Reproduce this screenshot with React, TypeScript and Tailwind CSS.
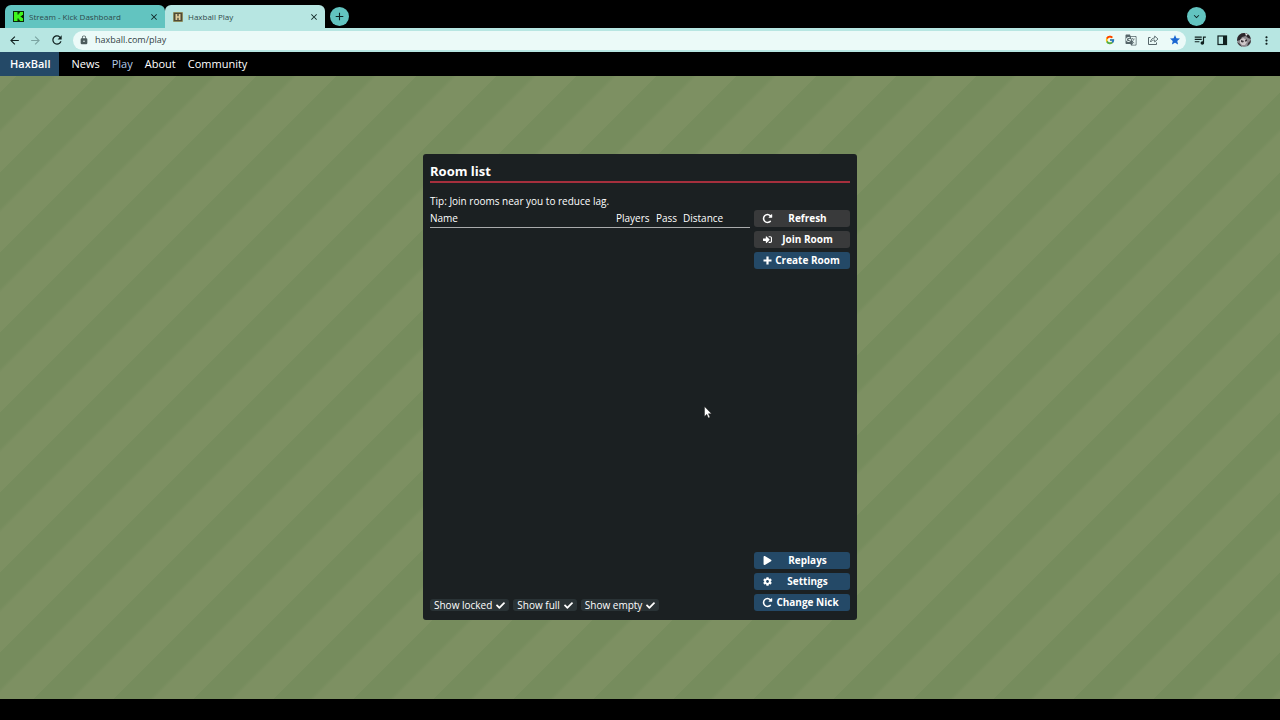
import { FC, ReactNode } from 'react';
import clsx from 'clsx';
import { FaCheck, FaCog, FaPlay, FaSignInAlt } from 'react-icons/fa';
import { FcGoogle } from 'react-icons/fc';
import {
  MdAdd,
  MdArrowBack,
  MdArrowForward,
  MdClose,
  MdExpandMore,
  MdGTranslate,
  MdLock,
  MdMoreVert,
  MdQueueMusic,
  MdRefresh,
  MdStar,
} from 'react-icons/md';

const RotateIcon: FC = () => (
  <svg viewBox="0 0 1792 1792" width="11" height="11" fill="currentColor" aria-hidden="true">
    <path d="M1664 256v448q0 26-19 45t-45 19h-448q-42 0-59-40-17-39 14-69l138-138q-148-137-349-137-104 0-198.500 40.500t-163.500 109.500-109.500 163.500-40.500 198.500 40.500 198.500 109.500 163.500 163.500 109.500 198.500 40.500q119 0 225-52t179-147q7-10 23-12 15 0 25 9l137 138q9 8 9.500 20.500t-7.500 22.500q-109 132-264 204.500t-327 72.500q-156 0-298-61t-245-164-164-245-61-298 61-298 164-245 245-164 298-61q147 0 284.500 55.500t244.500 156.500l130-129q29-31 70-14 39 17 39 59z" />
  </svg>
);

const PlusIcon: FC = () => (
  <svg viewBox="0 0 9 9" width="9" height="9" fill="currentColor" aria-hidden="true">
    <path d="M3.400.500h2.200v2.900h2.900v2.200H5.600v2.900H3.400V5.600H.500V3.400h2.900z" />
  </svg>
);

const KickLogo: FC = () => (
  <svg viewBox="0 0 11 11" width="11" height="11" aria-hidden="true">
    <rect width="11" height="11" fill="#0a2a08" />
    <path
      d="M1 1h3.500v2.500h1.200V2.200h1.100V1H10v3H8.800v1H7.700v1h1.100v1H10v3H6.800V8.800H5.700V7.500H4.500V10H1z"
      fill="#3df51c"
    />
  </svg>
);

const HaxballLogo: FC = () => (
  <svg viewBox="0 0 10 10" width="10" height="10" aria-hidden="true">
    <rect width="10" height="10" rx="1" fill="#8a8a5c" />
    <rect x="1" y="1" width="8" height="8" fill="#4f4a37" />
    <path d="M2.500 2h1.800v2.200h1.400V2h1.800v6H5.700V5.800H4.300V8H2.500z" fill="#e0cd9c" />
  </svg>
);

const ShareIcon: FC = () => (
  <svg viewBox="0 0 12 12" width="12" height="12" fill="none" stroke="#56666a" aria-hidden="true">
    <path d="M3.500 3.500h-2v7h8V8.500" />
    <path d="M3.500 8c.3-2.600 1.800-3.900 4.200-4V2l3.300 3-3.300 3V6C5.900 6 4.600 6.600 3.500 8z" strokeWidth="0.900" />
  </svg>
);

const SidePanelIcon: FC = () => (
  <svg viewBox="0 0 12 12" width="12" height="12" aria-hidden="true">
    <rect x="2" y="2" width="8.500" height="8.500" fill="none" stroke="#10201f" strokeWidth="1.200" />
    <path d="M7 2h3.500v8.500H7z" fill="#10201f" />
  </svg>
);

const Avatar: FC = () => (
  <svg viewBox="0 0 14 14" width="14" height="14" aria-hidden="true">
    <clipPath id="avatar">
      <circle cx="7" cy="7" r="7" />
    </clipPath>
    <g clipPath="url(#avatar)">
      <rect width="14" height="14" fill="#8f8b90" />
      <path d="M0 3l4-3h9l1 6-3-1-2-2-4 1-2 3-3 1z" fill="#2b262b" />
      <path d="M3 7l3-2 2 1 2 0 0 3-2 3-3 0-2-2z" fill="#cfc8ca" />
      <path d="M4 7l3 1-1 1.500L4 9zM8 7l2-1v2L8.500 9zM0 9l3 2 2 3H0zM14 7l-3 3-1 4h4z" fill="#3a3338" />
      <path d="M8 0l1 3 2-2z" fill="#f2eeee" />
    </g>
  </svg>
);

interface ITab {
  title: string;
  icon: ReactNode;
  active?: boolean;
}

const Tab: FC<ITab> = ({ title, icon, active }) => (
  <div
    className={clsx(
      'flex h-[23px] w-40 items-center rounded-t-md pr-[6px] pl-2 text-[8px] text-[#2f4a4b]',
      active ? 'bg-[#b7e6e2]' : 'bg-[#62c4c0]'
    )}
  >
    {icon}
    <span className="ml-[5px] flex-1 truncate">{title}</span>
    <button type="button" aria-label={`Close ${title}`} className="text-[#0d2222]">
      <MdClose size={10} />
    </button>
  </div>
);

const BrowserBar: FC = () => (
  <header>
    <div className="flex h-7 items-end bg-black pl-[5px]">
      <Tab title="Stream - Kick Dashboard" icon={<KickLogo />} />
      <Tab title="Haxball Play" icon={<HaxballLogo />} active />
      <button
        type="button"
        aria-label="New tab"
        className="mb-[2px] ml-[5px] flex size-[19px] items-center justify-center rounded-full bg-[#62c4c0] text-[#0d2222]"
      >
        <MdAdd size={13} />
      </button>
      <button
        type="button"
        aria-label="Search tabs"
        className="mr-[74px] mb-[2px] ml-auto flex size-[19px] items-center justify-center rounded-full bg-[#62c4c0] text-[#0d2222]"
      >
        <MdExpandMore size={11} />
      </button>
    </div>

    <div className="flex h-6 items-center bg-[#b7e6e2] pr-[7px] pl-2 text-[#10201f]">
      <div className="flex w-[65px] items-center gap-2">
        <button type="button" aria-label="Back">
          <MdArrowBack size={13} />
        </button>
        <button type="button" aria-label="Forward" className="text-[#7ba3a1]">
          <MdArrowForward size={13} />
        </button>
        <button type="button" aria-label="Reload">
          <MdRefresh size={14} />
        </button>
      </div>
      <div className="flex h-[19px] flex-1 items-center rounded-full bg-[#ebfaf8] pr-[5px] pl-[6px]">
        <MdLock size={10} className="text-[#4b5b5c]" />
        <input
          type="text"
          aria-label="Address"
          defaultValue="haxball.com/play"
          className="ml-[6px] min-w-0 flex-1 bg-transparent text-[9px] text-[#334245] outline-none"
        />
        <div className="flex items-center gap-[10px]">
          <FcGoogle size={10} />
          <MdGTranslate size={12} className="text-[#56666a]" />
          <ShareIcon />
          <MdStar size={12} className="text-[#1a67d2]" />
        </div>
      </div>
      <div className="ml-[7px] flex items-center gap-[9px]">
        <MdQueueMusic size={14} />
        <SidePanelIcon />
        <Avatar />
        <MdMoreVert size={13} />
      </div>
    </div>
  </header>
);

const links = ['News', 'Play', 'About', 'Community'];

const SiteNav: FC = () => (
  <nav className="flex h-6 items-stretch bg-black text-[11px] leading-6 font-medium text-white">
    <a href="#home" className="bg-[#244967] pr-[9px] pl-[10px] font-semibold">
      HaxBall
    </a>
    <div className="ml-3 flex gap-3">
      {links.map((link) => (
        <a
          key={link}
          href={`#${link.toLowerCase()}`}
          className={clsx(link === 'Play' && 'font-normal text-[#b4cbe8]')}
        >
          {link}
        </a>
      ))}
    </div>
  </nav>
);

interface IPanelButton {
  label: string;
  icon: ReactNode;
  muted?: boolean;
}

const PanelButton: FC<IPanelButton> = ({ label, icon, muted }) => (
  <button
    type="button"
    className={clsx(
      'flex h-[17px] items-center rounded-[3px] px-2 pb-px text-[10px] leading-4 font-bold text-white',
      muted ? 'bg-[#393a3b]' : 'bg-[#244967]'
    )}
  >
    <span className="flex w-[11px] shrink-0 justify-center">{icon}</span>
    <span className="flex-1 text-center whitespace-nowrap">{label}</span>
  </button>
);

const Toggle: FC<{ label: string }> = ({ label }) => (
  <label className="relative flex h-3 items-center gap-1 rounded-[3px] bg-[#2a3336] px-1 text-[10px] leading-3 whitespace-nowrap">
    {label}
    <input type="checkbox" defaultChecked className="peer sr-only" />
    <FaCheck size={9} className="invisible peer-checked:visible" />
  </label>
);

const RoomList: FC = () => (
  <section className="relative w-[434px] rounded-[3px] bg-[#1b2022] px-[7px] pt-2 pb-[9px] text-[10px] text-white">
    <h1 className="border-b-2 border-[#a62f3d] pb-px text-[13px] leading-[18px] font-bold">
      Room list
    </h1>
    <p className="mt-[10px] mb-px leading-4">Tip: Join rooms near you to reduce lag.</p>

    <div className="flex min-h-[401px] gap-1">
      <div className="flex flex-1 flex-col justify-between">
        <table className="w-full table-fixed text-left leading-[17px]">
          <thead>
            <tr className="border-b border-[#a9abac]">
              <th className="font-normal">Name</th>
              <th className="w-10 font-normal">Players</th>
              <th className="w-[27px] font-normal">Pass</th>
              <th className="w-[67px] font-normal">Distance</th>
            </tr>
          </thead>
          <tbody />
        </table>
        <div className="flex gap-1">
          <Toggle label="Show locked" />
          <Toggle label="Show full" />
          <Toggle label="Show empty" />
        </div>
      </div>

      <div className="flex w-24 flex-col gap-1">
        <PanelButton label="Refresh" icon={<RotateIcon />} muted />
        <PanelButton label="Join Room" icon={<FaSignInAlt size={9} />} muted />
        <PanelButton label="Create Room" icon={<PlusIcon />} />
        <div className="flex-1" />
        <PanelButton label="Replays" icon={<FaPlay size={9} />} />
        <PanelButton label="Settings" icon={<FaCog size={9} />} />
        <PanelButton label="Change Nick" icon={<RotateIcon />} />
      </div>
    </div>

    {/* mouse pointer */}
    <svg
      viewBox="0 0 8 13"
      width="8"
      height="13"
      className="absolute top-[252px] left-[281px]"
      aria-hidden="true"
    >
      <path d="M.5.500v10l2.300-2.200 1.600 3.700 1.600-.7-1.600-3.600h3.100z" fill="#fff" stroke="#111" strokeWidth="0.400" />
    </svg>
  </section>
);

const App: FC = () => {
  return (
    <div className="flex min-h-screen flex-col font-['Open_Sans',sans-serif]">
      <BrowserBar />
      <SiteNav />
      <main className="flex flex-1 items-center justify-center bg-[#7d9062] bg-[linear-gradient(135deg,#768c5d_0%,#768c5d_22%,#7d9062_25%,#7d9062_50%,#768c5d_50%,#768c5d_72%,#7d9062_75%)] bg-[length:80px_80px] bg-[position:17px_0px] pb-px">
        <RoomList />
      </main>
      <footer className="h-[21px] bg-black" />
    </div>
  );
};

export default App;
